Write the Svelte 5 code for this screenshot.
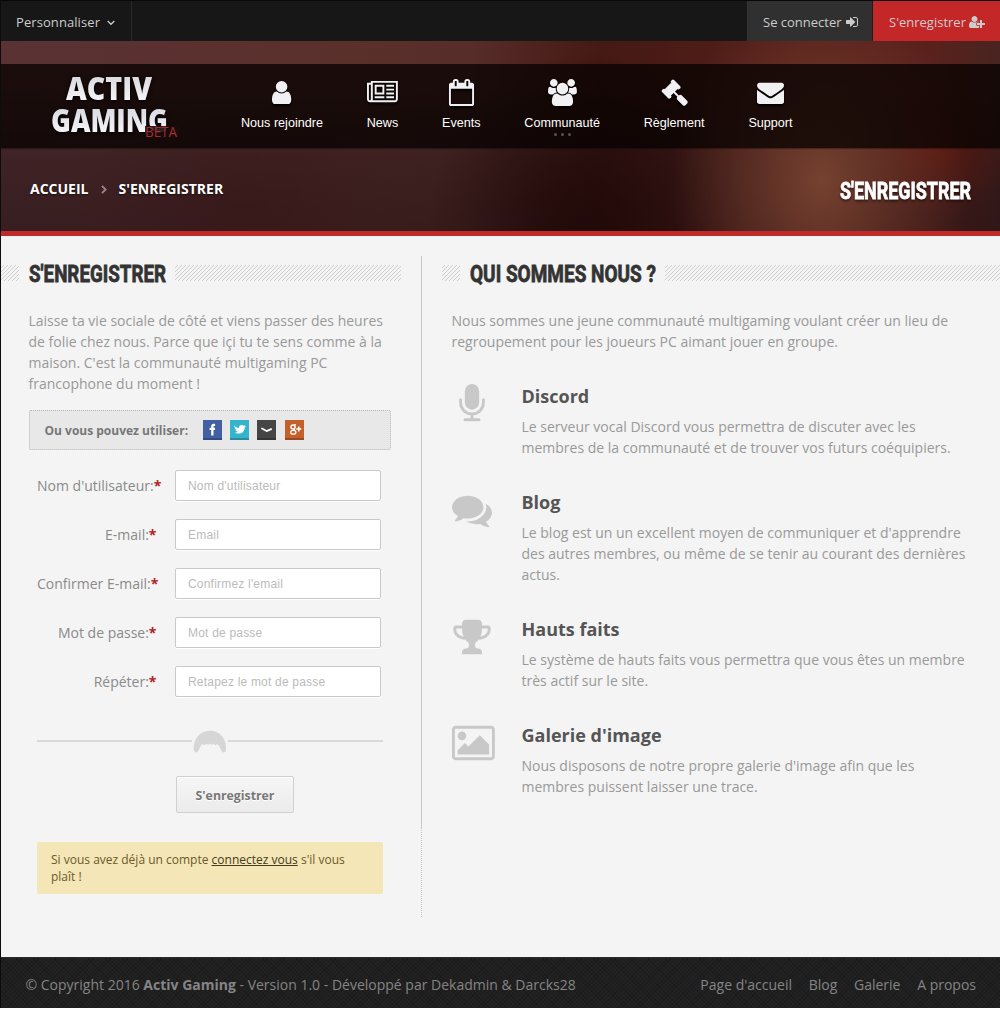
<script>
  const icons = {
    user: { w: 1408, d: 'M1344 1399q0 109-62.5 187t-150.5 78h-854q-88 0-150.5-78t-62.5-187q0-85 8.5-160.5t31.5-152 58.5-131 94-89 134.5-34.5q131 128 313 128t313-128q76 0 134.5 34.5t94 89 58.5 131 31.5 152 8.5 160.5zm-256-887q0 159-112.5 271.5t-271.5 112.5-271.5-112.5-112.5-271.5 112.5-271.5 271.5-112.5 271.5 112.5 112.5 271.5z' },
    news: { w: 2048, d: 'M1024 512h-384v384h384v-384zm128 640v128h-640v-128h640zm0-768v640h-640v-640h640zm640 768v128h-512v-128h512zm0-256v128h-512v-128h512zm0-256v128h-512v-128h512zm0-256v128h-512v-128h512zm-1536 960v-960h-128v960q0 26 19 45t45 19 45-19 19-45zm1664 0v-1088h-1536v1088q0 33-11 64h1483q26 0 45-19t19-45zm128-1216v1216q0 80-56 136t-136 56h-1664q-80 0-136-56t-56-136v-1088h256v-128h1792z' },
    calendar: { w: 1792, d: 'M192 1664h1408v-1024h-1408v1024zm384-1216v-288q0-14-9-23t-23-9h-64q-14 0-23 9t-9 23v288q0 14 9 23t23 9h64q14 0 23-9t9-23zm768 0v-288q0-14-9-23t-23-9h-64q-14 0-23 9t-9 23v288q0 14 9 23t23 9h64q14 0 23-9t9-23zm384-64v1280q0 52-38 90t-90 38h-1408q-52 0-90-38t-38-90v-1280q0-52 38-90t90-38h128v-96q0-66 47-113t113-47h64q66 0 113 47t47 113v96h384v-96q0-66 47-113t113-47h64q66 0 113 47t47 113v96h128q52 0 90 38t38 90z' },
    group: { w: 1920, d: 'M593 896q-162 5-265 128h-134q-82 0-138-40.5t-56-118.5q0-353 124-353 6 0 43.5 21t97.5 42.5 119 21.5q67 0 133-23-5 37-5 66 0 139 81 256zm1071 637q0 120-73 189.5t-194 69.5h-874q-121 0-194-69.5t-73-189.5q0-53 3.5-103.5t14-109 26.5-108.5 43-97.5 62-81 85.5-53.5 111.5-20q10 0 43 21.5t73 48 107 48 135 21.5 135-21.5 107-48 73-48 43-21.5q61 0 111.5 20t85.5 53.5 62 81 43 97.5 26.5 108.5 14 109 3.5 103.5zm-1024-1277q0 106-75 181t-181 75-181-75-75-181 75-181 181-75 181 75 75 181zm704 384q0 159-112.5 271.5t-271.5 112.5-271.5-112.5-112.5-271.5 112.5-271.5 271.5-112.5 271.5 112.5 112.5 271.5zm576 225q0 78-56 118.5t-138 40.5h-134q-103-123-265-128 81-117 81-256 0-29-5-66 66 23 133 23 59 0 119-21.5t97.5-42.5 43.5-21q124 0 124 353zm-128-609q0 106-75 181t-181 75-181-75-75-181 75-181 181-75 181 75 75 181z' },
    gavel: { w: 1792, d: 'M1771 1536q0 53-37 90l-107 108q-39 37-91 37-53 0-90-37l-363-364q-38-36-38-90 0-53 43-96l-256-256-126 126q-14 14-34 14t-34-14q2 2 12.5 12t12.5 13 10 11.5 10 13.5 6 13.5 5.5 16.5 1.5 18q0 38-28 68-3 3-16.5 18t-19 20.5-18.5 16.5-22 15.5-22 9-26 4.5q-40 0-68-28l-408-408q-28-28-28-68 0-13 4.5-26t9-22 15.5-22 16.5-18.5 20.5-19 18-16.5q30-28 68-28 10 0 18 1.5t16.5 5.5 13.5 6 13.5 10 11.5 10 13 12.5 12 12.5q-14-14-14-34t14-34l348-348q14-14 34-14t34 14q-2-2-12.5-12t-12.5-13-10-11.5-10-13.5-6-13.5-5.500-16.500-1.500-18q0-38 28-68 3-3 16.5-18t19-20.5 18.5-16.5 22-15.5 22-9 26-4.5q40 0 68 28l408 408q28 28 28 68 0 13-4.5 26t-9 22-15.5 22-16.5 18.5-20.5 19-18 16.5q-30 28-68 28-10 0-18-1.5t-16.5-5.5-13.5-6-13.5-10-11.5-10-13-12.5-12-12.5q14 14 14 34t-14 34l-126 126 256 256q43-43 96-43 52 0 91 37l363 363q37 39 37 91z' },
    envelope: { w: 1792, d: 'M1792 710v794q0 66-47 113t-113 47h-1472q-66 0-113-47t-47-113v-794q44 49 101 87 362 246 497 345 57 42 92.5 65.5t94.5 48 110 24.5h2q51 0 110-24.5t94.5-48 92.5-65.5q170-123 498-345 57-39 100-87zm0-294q0 79-49 151t-122 123q-376 261-468 325-10 7-42.5 31t-54 38.5-52 32.5-57.5 27-50 9h-2q-23 0-50-9t-57.5-27-52-32.5-54-38.5-42.5-31q-91-64-262-182.5t-205-142.5q-62-42-117-115.5t-55-136.5q0-78 41.5-130t118.5-52h1472q65 0 112.5 47t47.5 113z' },
    mic: { w: 1792, d: 'M1472 704v128q0 221-147.5 384.5t-364.5 187.5v132h256q26 0 45 19t19 45-19 45-45 19h-640q-26 0-45-19t-19-45 19-45 45-19h256v-132q-217-24-364.5-187.5t-147.5-384.5v-128q0-26 19-45t45-19 45 19 19 45v128q0 185 131.5 316.5t316.5 131.5 316.5-131.5 131.5-316.5v-128q0-26 19-45t45-19 45 19 19 45zm-256-384v512q0 132-94 226t-226 94-226-94-94-226v-512q0-132 94-226t226-94 226 94 94 226z' },
    comments: { w: 1792, d: 'M1408 768q0 139-94 257t-256.5 186.5-353.5 68.5q-86 0-176-16-124 88-278 128-36 9-86 16h-3q-11 0-20.5-8t-11.5-21q-1-3-1-6.5t.5-6.5 2-6l2.5-5 3.5-5.5 4-5 4.5-5 4-4.5q5-6 23-25t26-29.5 22.5-29 25-38.5 20.5-44q-124-72-195-177t-71-224q0-139 94-257t256.5-186.5 353.5-68.5 353.5 68.5 256.5 186.5 94 257zm384 256q0 120-71 224.5t-195 176.5q10 24 20.5 44t25 38.5 22.5 29 26 29.5 23 25q1 1 4 4.5t4.5 5 4 5 3.5 5.5l2.5 5 2 6 .5 6.5-1 6.5q-3 14-13 22t-22 7q-50-7-86-16-154-40-278-128-90 16-176 16-271 0-472-132 58 4 88 4 161 0 309-45t264-129q125-92 192-212t67-254q0-77-23-152 129 71 204 178t75 230z' },
    trophy: { w: 1792, d: 'M522 883q-74-162-74-371h-256v96q0 78 94.5 162t235.5 113zm1078-275v-96h-256q0 209-74 371 141-29 235.5-113t94.5-162zm128-128v128q0 71-41.5 143t-112 130-173 97.5-215.5 44.5q-42 54-95 95-38 34-52.5 72.5t-14.5 89.5q0 54 30.5 91t97.5 37q75 0 133.5 45.5t58.5 114.5v64q0 14-9 23t-23 9h-832q-14 0-23-9t-9-23v-64q0-69 58.5-114.5t133.5-45.5q67 0 97.5-37t30.5-91q0-51-14.5-89.5t-52.5-72.5q-53-41-95-95-113-5-215.5-44.5t-173-97.5-112-130-41.5-143v-128q0-40 28-68t68-28h288v-96q0-66 47-113t113-47h576q66 0 113 47t47 113v96h288q40 0 68 28t28 68z' },
    image: { w: 1920, d: 'M640 576q0 80-56 136t-136 56-136-56-56-136 56-136 136-56 136 56 56 136zm1024 384v448h-1408v-192l320-320 160 160 512-512zm96-704h-1600q-13 0-22.5 9.5t-9.5 22.5v1216q0 13 9.5 22.5t22.5 9.5h1600q13 0 22.5-9.5t9.5-22.5v-1216q0-13-9.5-22.5t-22.5-9.5zm160 32v1216q0 66-47 113t-113 47h-1600q-66 0-113-47t-47-113v-1216q0-66 47-113t113-47h1600q66 0 113 47t47 113z' },
    signin: { w: 1792, d: 'M1312 896q0 26-19 45l-544 544q-19 19-45 19t-45-19-19-45v-288h-448q-26 0-45-19t-19-45v-384q0-26 19-45t45-19h448v-288q0-26 19-45t45-19 45 19l544 544q19 19 19 45zm352-352v704q0 119-84.5 203.5t-203.5 84.5h-320q-13 0-22.5-9.5t-9.5-22.5q0-4-1-20t-.5-26.5 3-23.5 10-19.5 20.5-6.5h320q66 0 113-47t47-113v-704q0-66-47-113t-113-47h-312l-11.5-1-11.5-3-8-5.5-7-9-2-13.5q0-4-1-20t-.5-26.5 3-23.5 10-19.5 20.5-6.5h320q119 0 203.5 84.5t84.5 203.5z' },
    userplus: { w: 2048, d: 'M704 896q-159 0-271.5-112.5t-112.5-271.5 112.5-271.5 271.5-112.5 271.5 112.5 112.5 271.5-112.5 271.5-271.5 112.5zm960 128h352q13 0 22.5 9.5t9.5 22.5v192q0 13-9.5 22.5t-22.5 9.5h-352v352q0 13-9.5 22.5t-22.5 9.5h-192q-13 0-22.5-9.5t-9.5-22.5v-352h-352q-13 0-22.5-9.5t-9.5-22.5v-192q0-13 9.5-22.5t22.5-9.5h352v-352q0-13 9.5-22.5t22.5-9.5h192q13 0 22.5 9.5t9.5 22.5v352zm-736 224q0 52 38 90t90 38h256v238q-68 50-171 50h-874q-121 0-194-69t-73-190q0-53 3.5-103.5t14-109 26.5-108.5 43-97.5 62-81 85.5-53.5 111.5-20q19 0 39 17 79 61 154.5 91.5t164.5 30.5 164.5-30.5 154.5-91.5q20-17 39-17 132 0 217 96h-223q-52 0-90 38t-38 90v192z' }
  };

  const nav = [
    { icon: 'user', label: 'Nous rejoindre' },
    { icon: 'news', label: 'News' },
    { icon: 'calendar', label: 'Events' },
    { icon: 'group', label: 'Communauté', more: true },
    { icon: 'gavel', label: 'Règlement' },
    { icon: 'envelope', label: 'Support' }
  ];

  const fields = [
    { label: "Nom d'utilisateur:", hint: "Nom d'utilisateur", pad: 14.5 },
    { label: 'E-mail:', hint: 'Email', pad: 18.5 },
    { label: 'Confirmer E-mail:', hint: "Confirmez l'email", pad: 17.5 },
    { label: 'Mot de passe:', hint: 'Mot de passe', pad: 18.5 },
    { label: 'Répéter:', hint: 'Retapez le mot de passe', pad: 18.5 }
  ];

  const features = [
    { icon: 'mic', title: 'Discord', lines: ['Le serveur vocal Discord vous permettra de discuter avec les', 'membres de la communauté et de trouver vos futurs coéquipiers.'] },
    { icon: 'comments', title: 'Blog', lines: ["Le blog est un un excellent moyen de communiquer et d'apprendre", 'des autres membres, ou même de se tenir au courant des dernières', 'actus.'] },
    { icon: 'trophy', title: 'Hauts faits', lines: ['Le système de hauts faits vous permettra que vous êtes un membre', 'très actif sur le site.'] },
    { icon: 'image', title: "Galerie d'image", lines: ["Nous disposons de notre propre galerie d'image afin que les", 'membres puissent laisser une trace.'] }
  ];
</script>

{#snippet icon(name, size)}
  <svg class="icon" width={(icons[name].w / 1792) * size} height={size} viewBox="0 0 {icons[name].w} 1792" aria-hidden="true"><path d={icons[name].d} /></svg>
{/snippet}

{#snippet condensed(text, width)}
  <svg class="condensed" {width} height="30" viewBox="0 0 {width} 30"><text x="0" y="24" textLength={width} lengthAdjust="spacingAndGlyphs">{text}</text></svg>
{/snippet}

<div class="page">
  <header class="topbar">
    <a class="customize" href="#theme">Personnaliser
      <svg width="8" height="6" viewBox="0 0 8 6"><path d="M.7 1l3.3 3.3L7.3 1" fill="none" stroke="#ccc" stroke-width="1.3" /></svg>
    </a>
    <div class="account">
      <a class="login" href="#login">Se connecter {@render icon('signin', 14)}</a>
      <a class="join" href="#join">S'enregistrer {@render icon('userplus', 14)}</a>
    </div>
  </header>

  <div class="hero">
    <div class="mainnav">
      <a class="logo" href="#home">
        <svg width="140" height="72" viewBox="0 0 140 72">
          <defs>
            <linearGradient id="silver" x1="0" y1="0" x2="0" y2="1">
              <stop offset="0" stop-color="#cfcfd8" /><stop offset="1" stop-color="#fff" />
            </linearGradient>
          </defs>
          <text class="name" x="20" y="29" textLength="86" lengthAdjust="spacingAndGlyphs">ACTIV</text>
          <text class="name" x="5" y="61" textLength="117" lengthAdjust="spacingAndGlyphs">GAMING</text>
          <rect x="99" y="55" width="33" height="12" fill="#170c0b" opacity=".9" />
          <text class="beta" x="99" y="66" textLength="32" lengthAdjust="spacingAndGlyphs">BETA</text>
        </svg>
      </a>
      <nav>
        {#each nav as item}
          <a href="#{item.icon}">
            {@render icon(item.icon, 27)}
            <span>{item.label}</span>
            {#if item.more}<i><b></b><b></b><b></b></i>{/if}
          </a>
        {/each}
      </nav>
    </div>
    <div class="title">
      <div class="crumbs">
        <a href="#home">ACCUEIL</a>
        <svg width="6" height="9" viewBox="0 0 6 9"><path d="M1 .8l3.6 3.7L1 8.2" fill="none" stroke="#9a8583" stroke-width="1.9" /></svg>
        <span>S'ENREGISTRER</span>
      </div>
      <h1>{@render condensed("S'ENREGISTRER", 131)}</h1>
    </div>
  </div>

  <main>
    <section class="left">
      <h2 class="striped">{@render condensed("S'ENREGISTRER", 137)}</h2>
      <p class="intro">Laisse ta vie sociale de côté et viens passer des heures<br />de folie chez nous. Parce que içi tu te sens comme à la<br />maison. C'est la communauté multigaming PC<br />francophone du moment !</p>
      <div class="social">
        <strong>Ou vous pouvez utiliser:</strong>
        <svg class="fb" width="19" height="20" viewBox="0 0 19 20"><path d="M8.2 15.500v-5.500H6.600V7.700h1.600V6.500c0-1.900.9-2.700 2.500-2.700h1.400v2.200h-.9c-.6 0-.7.3-.7.800v.900h1.600l-.2 2.300h-1.400v5.500z" /></svg>
        <svg class="tw" width="19" height="20" viewBox="0 0 19 20"><path d="M4 5.500c1.500 1.500 3 2.300 5 2.400-.2-2.600 2.800-3.800 4.600-2.100l1.800-.6-.8 1.300 1.400-.2-1.300 1.400c0 4.300-4.500 7.500-9.900 5 1.400 0 2.300-.3 3.100-.9-1.300-.1-2-.7-2.300-1.700h1c-1.300-.5-1.900-1.400-1.900-2.500l1 .2C4.500 7.200 4 6.500 4 5.500z" /></svg>
        <svg class="steam" width="19" height="20" viewBox="0 0 19 20"><path d="M5 8.500l4.600 2.600 4.600-2" fill="none" stroke="#fff" stroke-width="1.700" stroke-linecap="round" stroke-linejoin="round" /></svg>
        <svg class="gp" width="19" height="20" viewBox="0 0 19 20"><g fill="none" stroke="#fff"><circle cx="8" cy="6.900" r="2" stroke-width="1.500" /><path d="M9 4.900h2M8.400 8.700l1.800 1.800" stroke-width="1.200" /><ellipse cx="8.300" cy="12.300" rx="2.600" ry="1.900" stroke-width="1.300" /><path d="M11.300 8.900h5M13.800 6.400v5" stroke-width="1.500" /></g></svg>
      </div>
      <form>
        {#each fields as f}
          <label>
            <span style:padding-right="{f.pad}px">{f.label}<b>*</b></span>
            <input placeholder={f.hint} />
          </label>
        {/each}
        <div class="divider">
          <svg width="34" height="23" viewBox="0 0 34 23"><path d="M.8 20C0 10.500 6 .8 17 .8S34 10.500 33 20c-.3 3-3.600 3-4.500 1-1.200-3-1.900-5.200-4.300-7-1.700 1.300-3 1.200-3.900-.5-1.200 1.600-2.400 1.600-3.400.1-1 1.500-2.200 1.500-3.400-.1-.9 1.700-2.200 1.800-3.900.5-2.300 1.800-3 4-4.300 7-.9 2-4.200 2-4.500-1z" /></svg>
        </div>
        <button type="button">S'enregistrer</button>
        <div class="notice">Si vous avez déjà un compte <a href="#login">connectez vous</a> s'il vous<br />plaît !</div>
      </form>
    </section>

    <div class="rule"></div>

    <section class="right">
      <h2 class="striped">{@render condensed('QUI SOMMES NOUS ?', 186)}</h2>
      <p class="intro">Nous sommes une jeune communauté multigaming voulant créer un lieu de<br />regroupement pour les joueurs PC aimant jouer en groupe.</p>
      <ul>
        {#each features as f}
          <li>
            <div class="pic">{@render icon(f.icon, 40)}</div>
            <div>
              <h3>{f.title}</h3>
              <p>{#each f.lines as line}{line}<br />{/each}</p>
            </div>
          </li>
        {/each}
      </ul>
    </section>
  </main>

  <footer>
    <span>© Copyright 2016 <strong>Activ Gaming</strong> - Version 1.0 - Développé par Dekadmin &amp; Darcks28</span>
    <nav><a href="#home">Page d'accueil</a><a href="#blog">Blog</a><a href="#gallery">Galerie</a><a href="#about">A propos</a></nav>
  </footer>
</div>

<style>
  :global(body) { background: #fff; overflow: hidden; }
  .page { box-sizing: border-box; width: 1000px; height: 1008px; border-left: 1px solid #0c0c0c; background: #f4f4f4; font: 14px/21px 'Open Sans', 'Noto Sans', sans-serif; color: #999; display: flex; flex-direction: column; overflow: hidden; white-space: nowrap; }
  a { color: inherit; text-decoration: none; }
  h1, h2, h3, p, ul { margin: 0; padding: 0; }
  .icon { display: block; fill: currentColor; overflow: visible; }

  .topbar { height: 41px; flex: none; box-sizing: border-box; background: #171717; border-top: 1px solid #080808; display: flex; justify-content: space-between; font-size: 13px; color: #ccc; }
  .customize { display: flex; align-items: center; gap: 7px; padding: 3px 15px 0; border-right: 1px solid #2a2a2a; box-sizing: border-box; width: 131px; height: 40px; letter-spacing: .08px; }
  .account { display: flex; }
  .account a { display: flex; align-items: center; gap: 3px; box-sizing: border-box; padding: 3px 0 0 16px; height: 40px; }
  .account .icon { margin-top: -1px; }
  .login { width: 126px; background: #303030; border-right: 1px solid #1d1d1d; }
  .join { width: 127px; background: #c42727; }

  .hero { flex: none; box-sizing: border-box; height: 195px; padding-top: 23px; border-bottom: 5px solid #c02a29;
    background:
      radial-gradient(ellipse 150px 190px at 820px 140px, rgba(128, 72, 52, .85), transparent),
      radial-gradient(ellipse 80px 70px at 935px 105px, rgba(92, 22, 14, .8), transparent),
      radial-gradient(ellipse 160px 180px at 585px 190px, rgba(30, 8, 7, .85), transparent),
      radial-gradient(ellipse 170px 110px at 240px 170px, rgba(55, 20, 22, .5), transparent),
      linear-gradient(180deg, transparent 0 25%, rgba(24, 14, 18, .42) 60%, rgba(24, 10, 14, .5)),
      linear-gradient(90deg, #5a3234, #5a302b 35%, #572d29 47%, #451914 60%, #551f1a 80%, #5a211c 93%, #482420); }
  .mainnav { height: 84px; display: flex; background: rgba(8, 2, 1, .78); box-shadow: 0 1px 1px rgba(0, 0, 0, .3); }
  .logo { width: 240px; padding: 7px 0 0 45px; box-sizing: border-box; }
  .logo svg { display: block; }
  .name { font: 800 31px 'Open Sans', sans-serif; fill: url(#silver); filter: drop-shadow(0 1px 2px #000); }
  .beta { font: 15px 'Open Sans', sans-serif; fill: #a52c33; }
  .mainnav nav { display: flex; gap: 43.800px; color: #fff; font: 12.6px/16px 'Liberation Sans', sans-serif; }
  .mainnav nav a { display: flex; flex-direction: column; align-items: center; position: relative; padding-top: 15px; }
  .mainnav nav span { margin-top: 9px; }
  .mainnav nav .icon { color: #f1f1f3; filter: drop-shadow(0 2px 1px #000); }
  .mainnav i { position: absolute; top: 69px; display: flex; gap: 4px; }
  .mainnav i b { width: 3px; height: 3px; border-radius: 50%; background: #5b5150; }
  .title { display: flex; justify-content: space-between; height: 83px; padding: 0 29.500px 0 29px; color: #fff; }
  .crumbs { display: flex; align-items: center; font-weight: 700; padding-bottom: 3px; text-shadow: 0 1px 2px rgba(0, 0, 0, .6); }
  .crumbs svg { margin: 2px 11px 0 13px; }
  h1 { padding-top: 27px; filter: drop-shadow(0 2px 1px rgba(0, 0, 0, .45)); }
  .condensed { display: block; overflow: visible; font: 700 24.5px Roboto, 'Open Sans', sans-serif; fill: currentColor; stroke: currentColor; stroke-width: .8; }

  main { flex: none; height: 721px; display: flex; box-sizing: border-box; padding-top: 20px; }
  .left { width: 400px; }
  .rule { width: 1px; height: 661px; margin: 0 20px; background: linear-gradient(#c8c8c8 0 572px, transparent 572px), repeating-linear-gradient(#c4c4c4 0 1px, transparent 1px 2px); }
  .right { width: 558px; }
  .striped { display: flex; align-items: center; height: 34px; color: #333; }
  .striped::before, .striped::after { content: ''; height: 16px; background: repeating-linear-gradient(135deg, transparent 0 1.8px, #cdcdcd 1.8px 2.828px); }
  .striped::before { width: 18px; margin-right: 9.5px; }
  .striped::after { flex: 1; margin-left: 9.5px; }
  .striped .condensed { margin-top: -1px; }
  .intro { margin-top: 20px; }
  .left .intro { padding-left: 27.500px; }
  .right .intro { padding-left: 9.500px; }

  .social { box-sizing: border-box; display: flex; align-items: center; margin: 16px 0 0 28px; width: 362px; height: 40px; padding-left: 14.5px; border: 1px dotted #b5b5b5; border-radius: 2px; background: #e8e8e8; }
  .social strong { width: 158.5px; font-size: 12px; color: #777; }
  .social svg { margin-right: 8px; fill: #fff; box-shadow: inset 0 -2px rgba(0, 0, 0, .22); }
  .fb { background: #4261a5; }
  .tw { background: #35b4cd; }
  .steam { background: #454545; }
  .gp { background: #c3602c; margin-left: 1px; }

  form { padding: 20px 18px 0 36px; }
  label { display: flex; height: 31px; margin-bottom: 18px; align-items: center; }
  label span { width: 138px; box-sizing: border-box; text-align: right; color: #8a8a8a; flex: none; }
  label b { color: #b3201f; }
  input { box-sizing: border-box; width: 206px; height: 31px; border: 1px solid #c9c9c9; border-radius: 2px; padding: 0 12px; background: #fff; font: 12px 'Liberation Sans', sans-serif; letter-spacing: .2px; box-shadow: 0 1px 0 #fff; }
  input::placeholder { color: #bbb; opacity: 1; }
  .divider { display: flex; align-items: center; gap: 1px; margin-top: 33px; height: 23px; }
  .divider::before, .divider::after { content: ''; height: 2px; background: #d9d9d9; flex: 1; margin-top: -1px; }
  .divider svg { fill: #d6d6d6; margin-top: -1px; }
  button { display: block; margin: 23px 0 0 139px; width: 118px; height: 37px; border: 1px solid #cfcfcf; border-radius: 2px; background: linear-gradient(#f6f6f6, #ebebeb); box-shadow: inset 0 1px #fff; font: 700 12.3px 'Open Sans', sans-serif; color: #777; padding: 2px 0 0; text-shadow: 0 1px #fff; }
  .notice { margin-top: 29px; height: 52px; box-sizing: border-box; padding: 9px 14px; border-radius: 2px; background: #f4e6b6; color: #6b5a2b; font-size: 12px; line-height: 17px; }
  .notice a { color: #443b20; text-decoration: underline; }

  ul { list-style: none; padding: 30px 0 0 9.500px; }
  li { display: flex; margin-bottom: 30px; }
  .pic { width: 40px; margin-right: 30px; display: flex; justify-content: center; color: #c8c8c8; padding-top: 1.500px; height: 40px; }
  .pic .icon { flex: none; }
  li:last-child .pic { justify-content: flex-start; }
  h3 { font-size: 18px; line-height: 28px; color: #555; }
  li p { margin-top: 6px; }

  footer { flex: none; height: 51px; box-sizing: border-box; padding: 3px 24px 0 24.500px; display: flex; align-items: center; justify-content: space-between; color: #858585; background: repeating-linear-gradient(45deg, rgba(0, 0, 0, .12) 0 1px, transparent 1px 3px), repeating-linear-gradient(-45deg, rgba(0, 0, 0, .12) 0 1px, transparent 1px 3px), #222; border-top: 1px solid #2c2c2c; }
  footer nav { display: flex; gap: 16.700px; }
</style>
